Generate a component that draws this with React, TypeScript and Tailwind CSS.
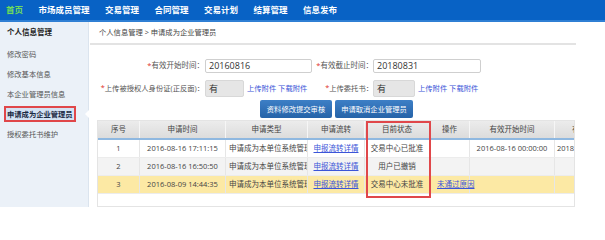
import React from 'react';

const FONT = { fontFamily: '"Open Sans","Noto Sans CJK SC",sans-serif' };

const navItems = ['首页', '市场成员管理', '交易管理', '合同管理', '交易计划', '结算管理', '信息发布'];
const sideItems = ['修改密码', '修改基本信息', '本企业管理员信息', '申请成为企业管理员', '授权委托书维护'];

const cols = [
  { t: '序号', w: 'w-[42px]' },
  { t: '申请时间', w: 'w-[86px]' },
  { t: '申请类型', w: 'w-[82px]' },
  { t: '申请流转', w: 'w-[57px]' },
  { t: '目前状态', w: 'w-[65px]' },
  { t: '操作', w: 'w-[40px]' },
  { t: '有效开始时间', w: 'w-[85px]' },
  { t: '有效截止时间', w: 'w-[80px]' },
];

const rows = [
  { no: '1', time: '2016-08-16 17:11:15', status: '交易中心已批准', op: '', start: '2016-08-16 00:00:00', end: '2018-08-31 00:00:00', bg: 'bg-white' },
  { no: '2', time: '2016-08-16 16:50:50', status: '用户已撤销', op: '', start: '', end: '', bg: 'bg-[#f3f3f3]' },
  { no: '3', time: '2016-08-09 14:44:35', status: '交易中心未批准', op: '未通过原因', start: '', end: '', bg: 'bg-[#fce9a4]' },
];

function Req({ children }: { children: React.ReactNode }) {
  return (
    <span>
      <span className="text-[#e0302a]">*</span>
      {children}
    </span>
  );
}

export default function App() {
  return (
    <div className="w-[605px] h-[240px] overflow-hidden bg-white text-[#333]" style={FONT}>
      {/* top nav */}
      <div className="h-[22px] bg-[#0862c5] border-b-[2px] border-[#2f7fd4] flex items-center pl-[6px] gap-[15.5px]">
        {navItems.map((n, i) => (
          <span key={n} className={`text-[8.5px] font-bold leading-none ${i === 0 ? 'text-[#6fdc5a]' : 'text-white'}`}>
            {n}
          </span>
        ))}
      </div>

      <div className="flex h-[185px]">
        {/* sidebar */}
        <div className="relative w-[89px] bg-[#ebf1f8] border-r border-[#dbe4ee]">
          <div className="h-[22px] flex items-center pl-[7px] text-[7.5px] font-bold text-[#222]">个人信息管理</div>
          {sideItems.map((s, i) =>
            i === 3 ? (
              <div key={s} className="h-[20px] flex items-center">
                <span className="ml-[4px] h-[16px] flex items-center px-[1px] border-2 border-[#e0474a] bg-[#d3e3f4] text-[7.3px] font-bold text-[#1b2a44]">
                  {s}
                </span>
              </div>
            ) : (
              <div key={s} className="h-[20px] flex items-center pl-[7px] text-[7.3px] text-[#555]">
                {s}
              </div>
            )
          )}
          <div className="absolute right-[-1px] top-[88px] w-0 h-0 border-y-[4px] border-y-transparent border-r-[4px] border-r-white" />
        </div>

        {/* main */}
        <div className="w-[486px] ml-[1px]">
          <div className="h-[23px] flex items-center pl-[9px] border-b-2 border-[#e3e3e3] text-[7.3px] text-[#444]">
            个人信息管理 &gt; 申请成为企业管理员
          </div>

          <div className="mt-[14px] flex items-center h-[14px] text-[7.5px] text-[#555]">
            <div className="w-[115px] text-right pr-[1px]">
              <Req>有效开始时间：</Req>
            </div>
            <div className="w-[115px]">
              <div className="w-[107px] h-[14px] border border-[#cfcfcf] rounded-[2px] flex items-center pl-[3px] text-[9px] text-[#333]">20160816</div>
            </div>
            <div className="w-[53px] text-right whitespace-nowrap flex justify-end">
              <Req>有效截止时间：</Req>
            </div>
            <div className="w-[108px] h-[14px] border border-[#cfcfcf] rounded-[2px] flex items-center pl-[3px] text-[9px] text-[#333]">20180831</div>
          </div>

          <div className="mt-[7px] flex items-center h-[17px] text-[7.3px] text-[#555]">
            <div className="w-[115px] text-right pr-[1px] whitespace-nowrap">
              <Req>上传被授权人身份证(正反面)：</Req>
            </div>
            <div className="w-[115px] flex items-center">
              <div className="w-[39px] h-[17px] bg-[#e6e6e6] border border-[#d8d8d8] rounded-[2px] flex items-center pl-[3px] text-[9px] text-[#333]">有</div>
              <span className="ml-[3px] text-[#3b55d8]">上传附件 下载附件</span>
            </div>
            <div className="w-[53px] whitespace-nowrap flex justify-end">
              <Req>上传委托书：</Req>
            </div>
            <div className="w-[42px] h-[17px] bg-[#e6e6e6] border border-[#d8d8d8] rounded-[2px] flex items-center pl-[3px] text-[9px] text-[#333]">有</div>
            <span className="ml-[3px] text-[7.3px] text-[#3b55d8]">上传附件 下载附件</span>
          </div>

          <div className="mt-[3px] flex h-[18px] pl-[170px] gap-[3px]">
            <div className="w-[72px] h-[18px] rounded-[2px] bg-gradient-to-b from-[#3d7fc6] to-[#2563a8] text-white text-[7.3px] flex items-center justify-center">资料修改提交审核</div>
            <div className="w-[78px] h-[18px] rounded-[2px] bg-gradient-to-b from-[#3d7fc6] to-[#2563a8] text-white text-[7.3px] flex items-center justify-center">申请取消企业管理员</div>
          </div>

          {/* table */}
          <div className="relative mt-[2px] ml-[7px] w-[478px] h-[87px] border border-[#e4e4e4] overflow-hidden">
            <div className="flex w-[600px] h-[19px] bg-gradient-to-b from-[#ececec] to-[#dcdcdc] border-b-2 border-[#8fb8e0] text-[7.5px] text-[#444]">
              {cols.map((c) => (
                <div key={c.t} className={`${c.w} shrink-0 flex items-center justify-center border-r border-[#f6f6f6]`}>
                  {c.t}
                </div>
              ))}
            </div>
            {rows.map((r) => (
              <div key={r.no} className={`flex w-[600px] h-[18px] text-[7.5px] text-[#444] ${r.bg} border-b border-[#ececec]`}>
                <div className="w-[42px] shrink-0 flex items-center justify-center border-r border-[#e6e6e6]">{r.no}</div>
                <div className="w-[86px] shrink-0 flex items-center justify-center border-r border-[#e6e6e6] whitespace-nowrap">{r.time}</div>
                <div className="w-[82px] shrink-0 flex items-center pl-[3px] border-r border-[#e6e6e6] whitespace-nowrap overflow-hidden">申请成为本单位系统管理员</div>
                <div className="w-[57px] shrink-0 flex items-center justify-center border-r border-[#e6e6e6] whitespace-nowrap">
                  <span className="text-[#3b55d8] underline">申报流转详情</span>
                </div>
                <div className="w-[65px] shrink-0 flex items-center justify-center border-r border-[#e6e6e6] whitespace-nowrap">{r.status}</div>
                <div className="w-[40px] shrink-0 flex items-center pl-[7px] border-r border-[#e6e6e6] whitespace-nowrap">
                  {r.op && <span className="text-[#3b55d8] underline">{r.op}</span>}
                </div>
                <div className="w-[85px] shrink-0 flex items-center justify-center border-r border-[#e6e6e6] whitespace-nowrap">{r.start}</div>
                <div className="w-[80px] shrink-0 flex items-center pl-[2px] border-r border-[#e6e6e6] whitespace-nowrap">{r.end}</div>
              </div>
            ))}
            <div className="absolute left-[268px] top-0 w-[65px] h-[77px] border-2 border-[#e0474a]" />
          </div>
        </div>
      </div>
    </div>
  );
}
